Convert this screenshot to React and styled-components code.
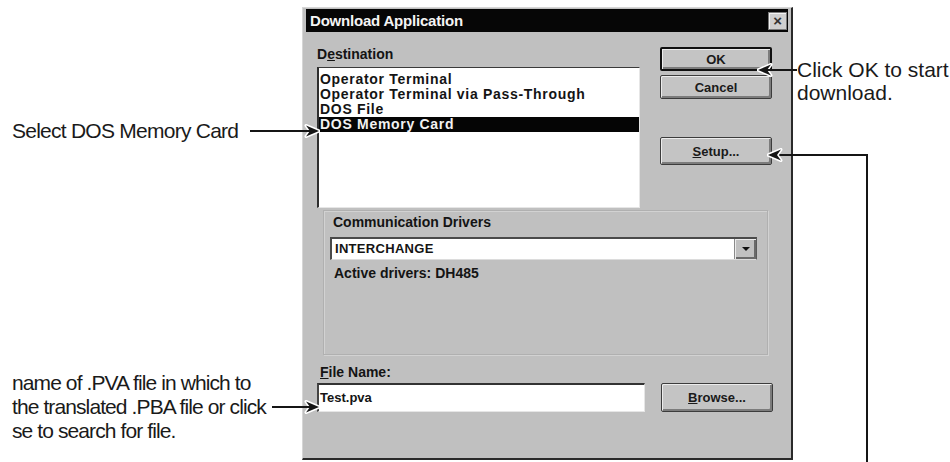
import React from "react";
import styled, { createGlobalStyle } from "styled-components";

const GlobalStyle = createGlobalStyle`
  html, body {
    margin: 0;
    padding: 0;
    background: #fff;
  }
  body {
    font-family: "Liberation Sans", Arial, sans-serif;
  }
`;

const Page = styled.div`
  width: 950px;
  height: 462px;
  overflow: hidden;
  display: grid;
  grid-template-columns: 302px 491px 1fr;
  background: #fff;
  color: #151515;
`;

/* ---------- callouts ---------- */

const Notes = styled.div`
  position: relative;
  z-index: 2;
  display: flex;
  flex-direction: column;
  padding-left: 12px;
`;

const HeadingTail = styled.div`
  height: 9px;
  overflow: hidden;
  margin-left: 25px;
  font-size: 44px;
  line-height: 44px;

  span {
    display: block;
    margin-top: -46px;
  }
`;

const Callout = styled.div`
  display: flex;
  align-items: center;
  margin-top: ${(p) => p.$top}px;
  margin-right: -18px;
`;

const NoteText = styled.div`
  font-family: "Liberation Sans", Arial, sans-serif;
  font-size: 21px;
  line-height: ${(p) => p.$line || 24}px;
  letter-spacing: ${(p) => p.$tight || 0}px;
  color: #1a1a1a;
  white-space: nowrap;
`;

const ArrowSvg = styled.svg`
  display: block;
  flex-shrink: 0;
  margin-left: auto;
`;

const SideNotes = styled.div`
  position: relative;
  z-index: 2;
  padding-top: 58px;
`;

const SideCallout = styled.div`
  display: flex;
  align-items: flex-start;

  ${ArrowSvg} {
    margin: 5px 0 0 -36px;
  }
`;

const Leader = styled.svg`
  position: absolute;
  left: -26px;
  top: 148px;
`;

const Arrow = ({ length, left }) => {
  const head = `M${length - 14} 1.5 L${length - 1} 7 L${length - 14} 12.5 L${length - 10} 7 Z`;
  return (
    <ArrowSvg width={length} height={14} viewBox={`0 0 ${length} 14`}>
      <g transform={left ? `translate(${length},0) scale(-1,1)` : undefined}>
        <path d={head} fill="#fff" stroke="#fff" strokeWidth="3" strokeLinejoin="round" />
        <line x1="0" y1="7" x2={length - 10} y2="7" stroke="#151515" strokeWidth="2" />
        <path d={head} fill="#151515" />
      </g>
    </ArrowSvg>
  );
};

/* ---------- dialog ---------- */

const Dialog = styled.div`
  margin-top: 7px;
  height: 453px;
  box-sizing: border-box;
  background: #c0c0c0;
  border: 1px solid #d6d6d6;
  border-right: 2px solid #2a2a2a;
  border-bottom: 2px solid #2a2a2a;
  padding: 1px 3px 3px 3px;
  display: flex;
  flex-direction: column;
  font-family: "Liberation Sans", Arial, sans-serif;
  font-weight: bold;
  color: #141414;
`;

const TitleBar = styled.div`
  height: 23px;
  background: #060606;
  color: #f4f4f4;
  display: flex;
  align-items: center;
  justify-content: space-between;
  padding: 0 1px 0 4px;
  font-size: 15px;
  letter-spacing: -0.2px;
`;

const CloseBox = styled.div`
  width: 19px;
  height: 18px;
  box-sizing: border-box;
  background: #cfcfcf;
  border: 1px solid #7a7a7a;
  box-shadow: inset 1px 1px #f2f2f2;
  color: #333;
  font-size: 15px;
  line-height: 15px;
  text-align: center;
`;

const Body = styled.div`
  flex: 1;
  display: flex;
  flex-direction: column;
  padding: 13px 16px 0 11px;
`;

const TopRow = styled.div`
  display: flex;
  justify-content: space-between;
  align-items: flex-start;
`;

const Column = styled.div`
  display: flex;
  flex-direction: column;
  width: ${(p) => p.$w}px;
  margin-top: ${(p) => p.$top || 0}px;
`;

const Label = styled.div`
  font-size: 14px;
  line-height: ${(p) => p.$line || 18}px;
  margin: ${(p) => p.$m || "0"};
  white-space: nowrap;
`;

const ListBox = styled.div`
  height: 141px;
  box-sizing: border-box;
  margin-top: 4px;
  background: #fff;
  border-top: 1px solid #3a3a3a;
  border-left: 2px solid #2e2e2e;
  border-right: 1px solid #e6e6e6;
  border-bottom: 1px solid #e6e6e6;
  padding-top: 4px;
`;

const ListItem = styled.div`
  height: 15px;
  line-height: 15px;
  padding-left: 1px;
  font-size: 14px;
  letter-spacing: 0.7px;
  white-space: nowrap;
  background: ${(p) => (p.$selected ? "#050505" : "transparent")};
  color: ${(p) => (p.$selected ? "#f2f2f2" : "#141414")};
`;

const Button = styled.div`
  height: ${(p) => p.$h || 24}px;
  margin-top: ${(p) => p.$top || 0}px;
  box-sizing: border-box;
  display: flex;
  align-items: center;
  justify-content: center;
  background: #c4c4c4;
  border: ${(p) => (p.$default ? "2px solid #101010" : "1px solid #3c3c3c")};
  border-radius: 2px;
  box-shadow: inset 1px 1px #ececec, inset -2px -2px #7c7c7c;
  font-size: 13px;
  color: #1a1a1a;
`;

const Group = styled.div`
  height: 145px;
  box-sizing: border-box;
  margin: 2px 4px 0 6px;
  border: 1px solid #b0b0b0;
  box-shadow: inset 1px 1px #d2d2d2, 1px 1px #d2d2d2;
  padding: 3px 10px 0 6px;
  display: flex;
  flex-direction: column;
`;

const Combo = styled.div`
  height: 23px;
  margin-top: 7px;
  box-sizing: border-box;
  display: flex;
  background: #fff;
  border-top: 2px solid #4a4a4a;
  border-left: 2px solid #4a4a4a;
  border-right: 1px solid #5a5a5a;
  border-bottom: 1px solid #dcdcdc;
`;

const ComboValue = styled.div`
  flex: 1;
  padding-left: 3px;
  font-size: 13px;
  line-height: 20px;
  letter-spacing: 0.3px;
`;

const DropButton = styled.div`
  width: 21px;
  display: flex;
  align-items: center;
  justify-content: center;
  background: #c0c0c0;
  border-left: 1px solid #8a8a8a;
  box-shadow: inset 1px 1px #ececec, inset -2px -2px #6a6a6a;

  &::after {
    content: "";
    width: 0;
    height: 0;
    border-left: 4px solid transparent;
    border-right: 4px solid transparent;
    border-top: 4px solid #111;
  }
`;

const BottomRow = styled.div`
  display: grid;
  grid-template-columns: 328px 1fr;
  grid-template-rows: auto 29px;
  row-gap: 3px;
  margin-top: 9px;
`;

const TextInput = styled.div`
  box-sizing: border-box;
  background: #fff;
  border-top: 2px solid #333;
  border-left: 2px solid #444;
  border-right: 1px solid #e6e6e6;
  border-bottom: 1px solid #e6e6e6;
  padding: 5px 0 0 1px;
  font-size: 13px;
  line-height: 16px;
`;

const BrowseSlot = styled.div`
  grid-column: 2;
  justify-self: end;
  width: 112px;
  margin-right: -1px;
`;

export default function App() {
  return (
    <>
      <GlobalStyle />
      <Page>
        <Notes>
          <HeadingTail>
            <span>p</span>
          </HeadingTail>
          <Callout $top={110}>
            <NoteText $tight={-0.75}>Select DOS Memory Card</NoteText>
            <Arrow length={70} />
          </Callout>
          <Callout $top={228}>
            <NoteText $tight={-0.9}>
              name of .PVA file in which to
              <br />
              the translated .PBA file or click
              <br />
              se to search for file.
            </NoteText>
            <Arrow length={48} />
          </Callout>
        </Notes>

        <Dialog>
          <TitleBar>
            <span>Download Application</span>
            <CloseBox>×</CloseBox>
          </TitleBar>
          <Body>
            <TopRow>
              <Column $w={323}>
                <Label>
                  D<u>e</u>stination
                </Label>
                <ListBox>
                  <ListItem>Operator Terminal</ListItem>
                  <ListItem>Operator Terminal via Pass-Through</ListItem>
                  <ListItem>DOS File</ListItem>
                  <ListItem $selected>DOS Memory Card</ListItem>
                </ListBox>
              </Column>
              <Column $w={112} $top={2}>
                <Button $default>OK</Button>
                <Button $top={4}>Cancel</Button>
                <Button $top={38} $h={28}>
                  <u>S</u>etup...
                </Button>
              </Column>
            </TopRow>

            <Group>
              <Label $line={16} $m="0 0 0 3px">
                Communication Drivers
              </Label>
              <Combo>
                <ComboValue>INTERCHANGE</ComboValue>
                <DropButton />
              </Combo>
              <Label $line={16} $m="5px 0 0 4px">
                Active drivers: DH485
              </Label>
            </Group>

            <BottomRow>
              <Label $line={16} $m="0 0 0 3px">
                <u>F</u>ile Name:
              </Label>
              <span />
              <TextInput>Test.pva</TextInput>
              <BrowseSlot>
                <Button $h={29}>
                  <u>B</u>rowse...
                </Button>
              </BrowseSlot>
            </BottomRow>
          </Body>
        </Dialog>

        <SideNotes>
          <SideCallout>
            <Arrow length={40} left />
            <NoteText $line={23}>
              Click OK to start
              <br />
              download.
            </NoteText>
          </SideCallout>
          <Leader width="104" height="320" viewBox="0 0 104 320">
            <path d="M 8 7 L 100 7 L 100 320" fill="none" stroke="#151515" strokeWidth="2" />
            <path d="M1 7 L14 1.5 L10 7 L14 12.5 Z" fill="#fff" stroke="#fff" strokeWidth="3" strokeLinejoin="round" />
            <path d="M1 7 L14 1.5 L10 7 L14 12.5 Z" fill="#151515" />
          </Leader>
        </SideNotes>
      </Page>
    </>
  );
}
